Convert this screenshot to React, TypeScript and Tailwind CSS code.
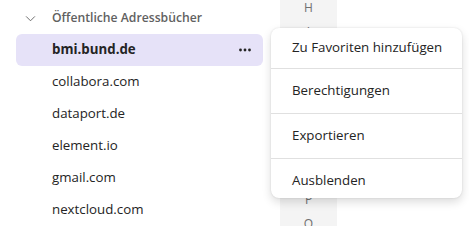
import React from 'react'

const domains = ['collabora.com', 'dataport.de', 'element.io', 'gmail.com', 'nextcloud.com']
const letters = ['H', 'I', 'J', 'K', 'L', 'M', 'N', 'O', 'P', 'Q']
const menu = ['Zu Favoriten hinzufügen', 'Berechtigungen', 'Exportieren', 'Ausblenden']

function Chevron() {
  return (
    <svg width="11" height="11" viewBox="0 0 12 12" fill="none" className="text-[#616161]">
      <path d="M1.5 4L6 8.5L10.5 4" stroke="currentColor" strokeWidth="1" strokeLinecap="round" strokeLinejoin="round" />
    </svg>
  )
}

function Dots() {
  return (
    <svg width="12" height="4" viewBox="0 0 12 4" className="text-[#242424]">
      <circle cx="1.5" cy="2" r="1.4" fill="currentColor" />
      <circle cx="6" cy="2" r="1.4" fill="currentColor" />
      <circle cx="10.5" cy="2" r="1.4" fill="currentColor" />
    </svg>
  )
}

export default function App() {
  return (
    <div className="relative h-[226px] w-[469px] overflow-hidden bg-white font-['Open_Sans',sans-serif] text-[#242424]">
      <div className="flex h-full">
        {/* Address book list */}
        <div className="w-[280px] shrink-0 pt-[2px]">
          <div className="flex h-8 items-center pl-[25px]">
            <Chevron />
            <span className="ml-4 text-[12.2px] font-semibold text-[#616161]">Öffentliche Adressbücher</span>
          </div>
          <div className="ml-4 mr-[17px] flex h-8 items-center justify-between rounded-md bg-[#e6e2f8] pl-9 pr-[12px]">
            <span className="text-[13.3px] font-bold">bmi.bund.de</span>
            <Dots />
          </div>
          {domains.map((d) => (
            <div key={d} className="ml-4 flex h-8 items-center pl-9 text-[13.3px]">
              {d}
            </div>
          ))}
        </div>

        {/* Alphabet index */}
        <div className="w-[57px] shrink-0 bg-[#f4f4f4]">
          <div className="-mt-1">
            {letters.map((l) => (
              <div key={l} className="flex h-6 items-center justify-center text-xs text-[#707070]">
                {l}
              </div>
            ))}
          </div>
        </div>
      </div>

      {/* Context menu */}
      <div className="absolute left-[271px] top-[28px] w-[191px] rounded-lg bg-white shadow-[0_0_2px_rgba(0,0,0,0.12),0_4px_10px_rgba(0,0,0,0.14)]">
        {menu.map((m, i) => (
          <div key={m}>
            {i > 0 && <div className="h-px bg-[#e0e0e0]" />}
            <div
              className={`flex items-center pl-[21px] text-[13.3px] ${i === 0 ? 'h-10' : i === menu.length - 1 ? 'h-[39px] pt-[5px]' : 'h-[44px]'}`}
            >
              {m}
            </div>
          </div>
        ))}
      </div>
    </div>
  )
}
